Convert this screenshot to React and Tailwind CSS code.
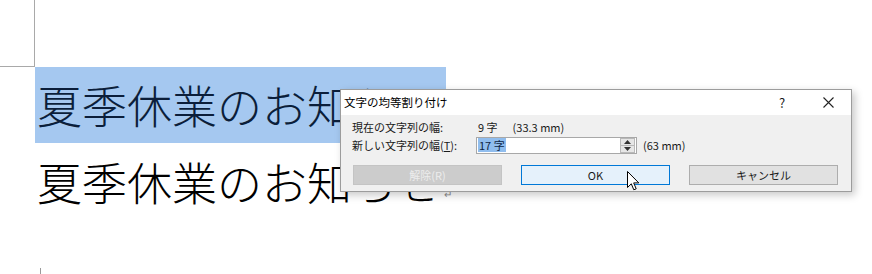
import React from 'react';

const ui = { fontFamily: '"Noto Sans CJK JP", "Noto Sans", sans-serif' };

function Cursor() {
  return (
    <svg className="absolute left-[627px] top-[171px]" width="13" height="21" viewBox="0 0 13 21">
      <path d="M0.5 0.5 L0.5 16.5 L4.3 12.8 L6.8 18.8 L9.2 17.8 L6.7 11.9 L11.8 11.9 Z" fill="#fff" stroke="#000" strokeWidth="1" strokeLinejoin="round" />
    </svg>
  );
}

function Spinner() {
  return (
    <div className="flex flex-col w-[15px] h-[15px] ml-auto mr-[1px] border border-[#b9b9b9] bg-[#e6e6e6]">
      <div className="flex-1 flex items-center justify-center border-b border-[#b9b9b9]">
        <svg width="7" height="4" viewBox="0 0 7 4"><path d="M0 4 L3.5 0 L7 4 Z" fill="#333" /></svg>
      </div>
      <div className="flex-1 flex items-center justify-center">
        <svg width="7" height="4" viewBox="0 0 7 4"><path d="M0 0 L3.5 4 L7 0 Z" fill="#333" /></svg>
      </div>
    </div>
  );
}

function Dialog() {
  return (
    <div
      className="absolute left-[340px] top-[89px] w-[512px] h-[103px] flex flex-col border border-[#9c9c9c] bg-[#f0f0f0] shadow-[3px_3px_8px_rgba(0,0,0,0.22)] text-[11px] text-[#1a1a1a]"
      style={ui}
    >
      {/* title bar */}
      <div className="h-[25px] flex items-center bg-white shrink-0">
        <span className="pl-[3px] text-[11.5px] text-black">文字の均等割り付け</span>
        <div className="ml-auto flex h-full">
          <div className="w-[46px] flex items-center justify-center text-[13px]">?</div>
          <div className="w-[46px] flex items-center justify-center">
            <svg width="11" height="11" viewBox="0 0 11 11"><path d="M0.5 0.5 L10.5 10.5 M10.5 0.5 L0.5 10.5" stroke="#222" strokeWidth="1.1" /></svg>
          </div>
        </div>
      </div>

      {/* body */}
      <div className="flex flex-col pt-[4px] pl-[11px]">
        <div className="h-[17px] flex items-center">
          <span className="w-[124px]">現在の文字列の幅:</span>
          <span className="pl-[2px]">9 字</span>
          <span className="pl-[15px]">(33.3 mm)</span>
        </div>
        <div className="h-[18px] flex items-center">
          <span className="w-[124px]">
            新しい文字列の幅(<span className="underline">T</span>):
          </span>
          <div className="w-[161px] h-[17px] flex items-center bg-white border border-[#a8a8a8]">
            <span className="ml-[1px] px-[1px] bg-[#90bdee] text-[#0c1f45] leading-[14px]">17 字</span>
            <Spinner />
          </div>
          <span className="pl-[6px]">(63 mm)</span>
        </div>
        <div className="flex gap-[19px] mt-[11px] pl-[1px]">
          <div className="w-[149px] h-[20px] flex items-center justify-center bg-[#cccccc] border border-[#c4c4c4] text-[#ededed]">
            解除(R)
          </div>
          <div className="w-[149px] h-[20px] flex items-center justify-center bg-[#e5f1fb] border border-[#0078d7]">
            OK
          </div>
          <div className="w-[149px] h-[20px] flex items-center justify-center bg-[#e1e1e1] border border-[#adadad]">
            キャンセル
          </div>
        </div>
      </div>
    </div>
  );
}

export default function App() {
  return (
    <div className="relative w-[872px] h-[274px] bg-white overflow-hidden" style={ui}>
      {/* page corner mark */}
      <div className="w-[35px] h-[67px] border-r border-b border-[#a9a9a9]" />

      {/* line 1, selected */}
      <div className="ml-[35px] w-[411px] h-[76px] bg-[#a5c8f0] flex items-center">
        <span className="pl-[2px] text-[45px] leading-[76px] font-light text-[#0b1e3a] whitespace-nowrap">
          夏季休業のお知らせ
        </span>
      </div>

      {/* line 2 */}
      <div className="ml-[35px] h-[78px] flex items-center">
        <span className="pl-[2px] text-[45px] leading-[78px] font-light text-black whitespace-nowrap">
          夏季休業のお知らせ
        </span>
        <span className="ml-[3px] mt-[22px] text-[10px] text-[#8a8a8a]">↵</span>
      </div>

      {/* next paragraph mark */}
      <div className="ml-[40px] mt-[47px] w-px h-[6px] bg-[#9a9a9a]" />

      <Dialog />
      <Cursor />
    </div>
  );
}
